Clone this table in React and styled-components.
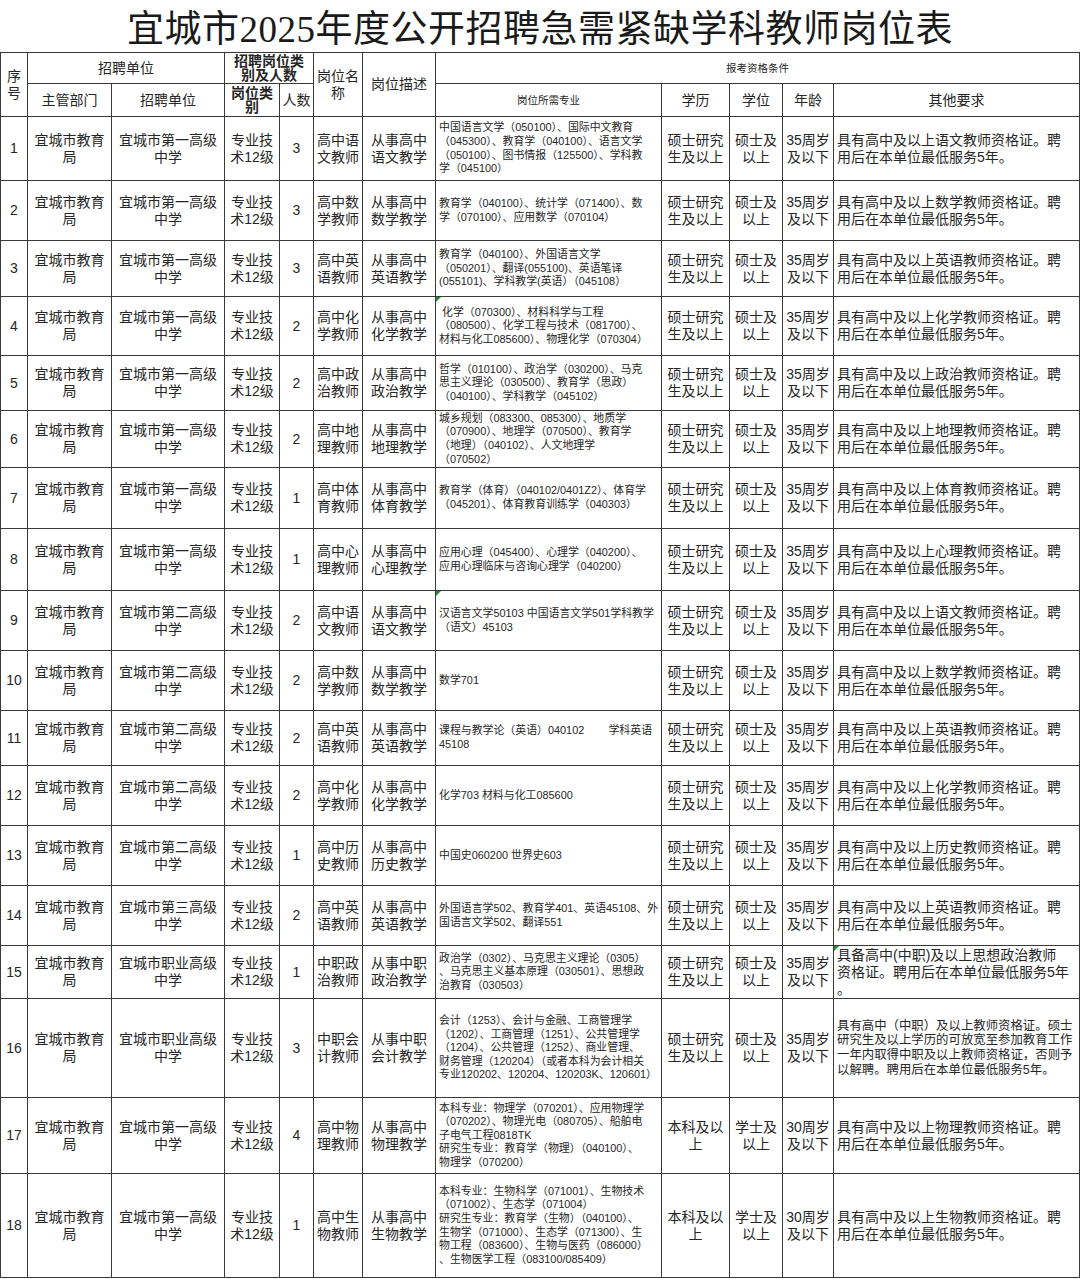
import React from "react";
import styled, { createGlobalStyle, css } from "styled-components";

const GlobalStyle = createGlobalStyle`
  html, body {
    margin: 0;
    padding: 0;
    background: #ffffff;
  }
  body {
    font-family: "Liberation Sans", "Noto Sans CJK SC", sans-serif;
    color: #262626;
  }
`;

const COLS = [27, 84, 113, 55, 34, 49, 73, 226, 68, 53, 51, 246];
const ROW_H = [64, 60, 56, 59, 55, 57, 61, 62, 60, 60, 55, 60, 60, 60, 53, 99, 76, 104];

const UNIT = {
  一: "宜城市第一高级\n中学",
  二: "宜城市第二高级\n中学",
  三: "宜城市第三高级\n中学",
  职: "宜城市职业高级\n中学",
};

const rows = [
  { school: "一", total: 3, subj: "语文", major: "中国语言文学（050100）、国际中文教育\n（045300）、教育学（040100）、语言文学\n（050100）、图书情报（125500）、学科教\n学（045100）" },
  { school: "一", total: 3, subj: "数学", major: "教育学（040100）、统计学（071400）、数\n学（070100）、应用数学（070104）" },
  { school: "一", total: 3, subj: "英语", major: "教育学（040100）、外国语言文学\n（050201）、翻译(055100)、英语笔译\n(055101)、学科教学(英语）（045108）" },
  { school: "一", total: 2, subj: "化学", flag: true, major: " 化学（070300）、材料科学与工程\n（080500）、化学工程与技术（081700）、\n材料与化工085600）、物理化学（070304）" },
  { school: "一", total: 2, subj: "政治", major: "哲学（010100）、政治学（030200）、马克\n思主义理论（030500）、教育学（思政）\n（040100）、学科教学（045102）" },
  { school: "一", total: 2, subj: "地理", major: "城乡规划（083300、085300）、地质学\n（070900）、地理学（070500）、教育学\n（地理）（040102）、人文地理学\n（070502）" },
  { school: "一", total: 1, subj: "体育", major: "教育学（体育）（040102/0401Z2）、体育学\n（045201）、体育教育训练学（040303）" },
  { school: "一", total: 1, subj: "心理", major: "应用心理（045400）、心理学（040200）、\n应用心理临床与咨询心理学（040200）" },
  { school: "二", total: 2, subj: "语文", flag: true, major: "汉语言文学50103 中国语言文学501学科教学\n（语文）45103" },
  { school: "二", total: 2, subj: "数学", major: "数学701" },
  { school: "二", total: 2, subj: "英语", major: "课程与教学论（英语）040102        学科英语\n45108" },
  { school: "二", total: 2, subj: "化学", major: "化学703 材料与化工085600" },
  { school: "二", total: 1, subj: "历史", major: "中国史060200 世界史603" },
  { school: "三", total: 2, subj: "英语", major: "外国语言学502、教育学401、英语45108、外\n国语言文学502、翻译551" },
  {
    school: "职", total: 1, subj: "政治", level: "中职", noteFlag: true,
    major: "政治学（0302）、马克思主义理论（0305）\n、马克思主义基本原理（030501）、思想政\n治教育（030503）",
    note: "具备高中(中职)及以上思想政治教师\n资格证。聘用后在本单位最低服务5年\n。",
  },
  {
    school: "职", total: 3, subj: "会计", level: "中职", smallNote: true,
    major: "会计（1253）、会计与金融、工商管理学\n（1202）、工商管理（1251）、公共管理学\n（1204）、公共管理（1252）、商业管理、\n财务管理（120204）（或者本科为会计相关\n专业120202、120204、120203K、120601）",
    note: "具有高中（中职）及以上教师资格证。硕士\n研究生及以上学历的可放宽至参加教育工作\n一年内取得中职及以上教师资格证，否则予\n以解聘。聘用后在本单位最低服务5年。",
  },
  {
    school: "一", total: 4, subj: "物理", bachelor: true,
    major: "本科专业：物理学（070201）、应用物理学\n（070202）、物理光电（080705）、船舶电\n子电气工程0818TK\n研究生专业：教育学（物理）（040100）、\n物理学（070200）",
  },
  {
    school: "一", total: 1, subj: "生物", bachelor: true,
    major: "本科专业：生物科学（071001）、生物技术\n（071002）、生态学（071004）\n研究生专业：教育学（生物）（040100）、\n生物学（071000）、生态学（071300）、生\n物工程（083600）、生物与医药（086000）\n、生物医学工程（083100/085409）",
  },
];

const Page = styled.div`
  width: 1080px;
`;

const Title = styled.h1`
  margin: 0;
  height: 52px;
  display: flex;
  align-items: center;
  justify-content: center;
  font-family: "Liberation Serif", "Noto Sans CJK SC", serif;
  font-size: 37px;
  font-weight: 400;
  letter-spacing: 0.5px;
  color: #1a1a1a;
`;

const Table = styled.table`
  width: 1080px;
  table-layout: fixed;
  border-collapse: collapse;
`;

const Row = styled.tr`
  height: ${(p) => p.$h}px;
`;

const flagMark = css`
  &::before {
    content: "";
    position: absolute;
    top: 0;
    left: 0;
    border-top: 5px solid #1f8f2f;
    border-right: 5px solid transparent;
  }
`;

const Cell = styled.td`
  position: relative;
  border: 1px solid #3a3a3a;
  padding: 0 2px;
  text-align: center;
  vertical-align: middle;
  font-size: 14px;
  line-height: 17px;
  white-space: pre-line;
  overflow: hidden;
  ${(p) => p.$flag && flagMark}
`;

const HeadCell = styled(Cell).attrs({ as: "th" })`
  font-weight: ${(p) => (p.$bold ? 700 : 400)};
  font-size: ${(p) => p.$size || 14}px;
  line-height: ${(p) => p.$lh || 17}px;
`;

const MajorCell = styled(Cell)`
  text-align: left;
  padding: 0 3px;
  font-size: 10.9px;
  line-height: 13.6px;
  white-space: pre;
`;

const NoteCell = styled(Cell)`
  text-align: left;
  padding: 0 3px;
  font-size: ${(p) => (p.$small ? 12.4 : 14)}px;
  line-height: ${(p) => (p.$small ? 14.6 : 17)}px;
`;

export default function App() {
  return (
    <Page>
      <GlobalStyle />
      <Title>宜城市2025年度公开招聘急需紧缺学科教师岗位表</Title>
      <Table>
        <colgroup>
          {COLS.map((w, i) => (
            <col key={i} style={{ width: w }} />
          ))}
        </colgroup>
        <thead>
          <Row $h={31}>
            <HeadCell rowSpan={2}>{"序\n号"}</HeadCell>
            <HeadCell colSpan={2}>招聘单位</HeadCell>
            <HeadCell colSpan={2} $bold $lh={14}>{"招聘岗位类\n别及人数"}</HeadCell>
            <HeadCell rowSpan={2}>{"岗位名\n称"}</HeadCell>
            <HeadCell rowSpan={2}>岗位描述</HeadCell>
            <HeadCell colSpan={5} $size={10.5}>报考资格条件</HeadCell>
          </Row>
          <Row $h={33}>
            <HeadCell>主管部门</HeadCell>
            <HeadCell>招聘单位</HeadCell>
            <HeadCell $bold $lh={14}>{"岗位类\n别"}</HeadCell>
            <HeadCell>人数</HeadCell>
            <HeadCell $size={10.5}>岗位所需专业</HeadCell>
            <HeadCell>学历</HeadCell>
            <HeadCell>学位</HeadCell>
            <HeadCell>年龄</HeadCell>
            <HeadCell>其他要求</HeadCell>
          </Row>
        </thead>
        <tbody>
          {rows.map((r, i) => {
            const level = r.level || "高中";
            const note =
              r.note || `具有高中及以上${r.subj}教师资格证。聘\n用后在本单位最低服务5年。`;
            return (
              <Row key={i} $h={ROW_H[i]}>
                <Cell>{i + 1}</Cell>
                <Cell>{"宜城市教育\n局"}</Cell>
                <Cell>{UNIT[r.school]}</Cell>
                <Cell>{"专业技\n术12级"}</Cell>
                <Cell>{r.total}</Cell>
                <Cell>{`${level}${r.subj[0]}\n${r.subj[1]}教师`}</Cell>
                <Cell>{`从事${level}\n${r.subj}教学`}</Cell>
                <MajorCell $flag={r.flag}>{r.major}</MajorCell>
                <Cell>{r.bachelor ? "本科及以\n上" : "硕士研究\n生及以上"}</Cell>
                <Cell>{r.bachelor ? "学士及\n以上" : "硕士及\n以上"}</Cell>
                <Cell>{r.bachelor ? "30周岁\n及以下" : "35周岁\n及以下"}</Cell>
                <NoteCell $flag={r.noteFlag} $small={r.smallNote}>
                  {note}
                </NoteCell>
              </Row>
            );
          })}
        </tbody>
      </Table>
    </Page>
  );
}
